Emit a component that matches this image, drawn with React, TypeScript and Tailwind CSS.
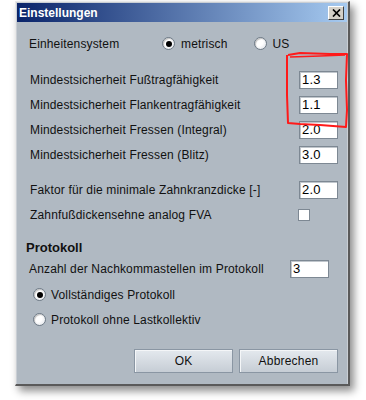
import React from "react";

const font = { fontFamily: '"Liberation Sans", Arial, sans-serif' };

function Radio({ checked }: { checked?: boolean }) {
  return (
    <span className="relative inline-flex h-[13px] w-[13px] items-center justify-center rounded-full border border-[#6f7b87] bg-[radial-gradient(circle_at_35%_35%,#ffffff_40%,#d8dde3_100%)] shadow-[inset_1px_1px_1px_rgba(0,0,0,0.25)]">
      {checked && <span className="h-[6px] w-[6px] rounded-full bg-black" />}
    </span>
  );
}

function Field({ value, w = "w-[39px]" }: { value: string; w?: string }) {
  return (
    <div className={`${w} h-[18px] border border-[#7d8893] bg-white pl-[2px] text-[13px] leading-[16px] text-black shadow-[inset_1px_1px_0_#c0c6cc]`}>
      {value}
    </div>
  );
}

function Row({ label, value }: { label: string; value: string }) {
  return (
    <div className="flex h-[25px] items-center pl-[13px]">
      <span className="w-[269px]">{label}</span>
      <Field value={value} />
    </div>
  );
}

function Btn({ label }: { label: string }) {
  return (
    <div className="flex h-[24px] w-[99px] items-center justify-center border border-[#8a96a3] bg-[linear-gradient(#e4e9ee,#c6cdd5)] text-[12px] tracking-[0.2px] text-[#111] shadow-[inset_1px_1px_0_#f4f6f8]">
      {label}
    </div>
  );
}

export default function App() {
  return (
    <div className="relative h-[400px] w-[366px] overflow-hidden bg-white" style={font}>
      <div className="ml-[15px] mt-[1px] w-[335px] border-l border-t border-l-[#e8e8e8] border-t-[#e8e8e8] border-r-2 border-b-2 border-r-[#5a5a5a] border-b-[#5a5a5a] bg-[#b0b9c2] shadow-[4px_5px_8px_rgba(0,0,0,0.45)]">
        <div className="border border-[#c9ced4] border-b-0">
          {/* Title bar */}
          <div className="flex h-[19px] items-center justify-between bg-[linear-gradient(90deg,#0a246a,#a6caf0)] pl-[2px] pr-[3px]">
            <span className="text-[12px] font-bold leading-none text-white">Einstellungen</span>
            <div className="flex h-[14px] w-[16px] items-center justify-center border border-t-white border-l-white border-r-[#404040] border-b-[#404040] bg-[#d4d0c8] text-[12px] font-bold leading-none text-black">
              <svg width="9" height="8" viewBox="0 0 9 8">
                <path d="M1 0.5 L8 7.5 M8 0.5 L1 7.5" stroke="#000" strokeWidth="1.7" />
              </svg>
            </div>
          </div>
          {/* Content */}
          <div className="text-[12px] tracking-[0.15px] text-[#111]">
            <div className="mt-[9px] flex h-[25px] items-center pl-[12px]">
              <span className="w-[133px]">Einheitensystem</span>
              <span className="flex items-center gap-[6px]">
                <Radio checked />
                <span>metrisch</span>
              </span>
              <span className="ml-[26px] flex items-center gap-[6px]">
                <Radio />
                <span>US</span>
              </span>
            </div>
            <div className="mt-[11px]">
              <Row label="Mindestsicherheit Fußtragfähigkeit" value="1.3" />
              <Row label="Mindestsicherheit Flankentragfähigkeit" value="1.1" />
              <Row label="Mindestsicherheit Fressen (Integral)" value="2.0" />
              <Row label="Mindestsicherheit Fressen (Blitz)" value="3.0" />
            </div>
            <div className="mt-[10px]">
              <Row label="Faktor für die minimale Zahnkranzdicke [-]" value="2.0" />
              <div className="flex h-[25px] items-center pl-[13px]">
                <span className="w-[268px]">Zahnfußdickensehne analog FVA</span>
                <span className="h-[12px] w-[12px] border border-[#7d8893] bg-white" />
              </div>
            </div>
            <div className="mt-[11px] flex h-[20px] items-center pl-[9px] text-[13px] font-bold tracking-normal">Protokoll</div>
            <div className="flex h-[22px] items-center pl-[12px]">
              <span className="w-[261px]">Anzahl der Nachkommastellen im Protokoll</span>
              <Field value="3" w="w-[39px]" />
            </div>
            <div className="mt-[2px] flex h-[25px] items-center gap-[5px] pl-[16px]">
              <Radio checked />
              <span>Vollständiges Protokoll</span>
            </div>
            <div className="flex h-[25px] items-center gap-[5px] pl-[16px]">
              <Radio />
              <span>Protokoll ohne Lastkollektiv</span>
            </div>
            <div className="mt-[17px] flex justify-end gap-[6px] pb-[11px] pr-[9px]">
              <Btn label="OK" />
              <Btn label="Abbrechen" />
            </div>
          </div>
        </div>
      </div>
      {/* red annotation */}
      <svg className="pointer-events-none absolute left-0 top-0" width="366" height="400">
        <path
          d="M288 55 L300 53 L330 54 L347 54 L346 80 L347 110 L346 127 L320 125 L300 124 L288 123 L287 95 L287 55"
          fill="none"
          stroke="#ff1a1a"
          strokeWidth="2"
          strokeLinejoin="round"
        />
        <path d="M290 57 L320 56 L345 55" fill="none" stroke="#ff1a1a" strokeWidth="1.3" />
      </svg>
    </div>
  );
}
